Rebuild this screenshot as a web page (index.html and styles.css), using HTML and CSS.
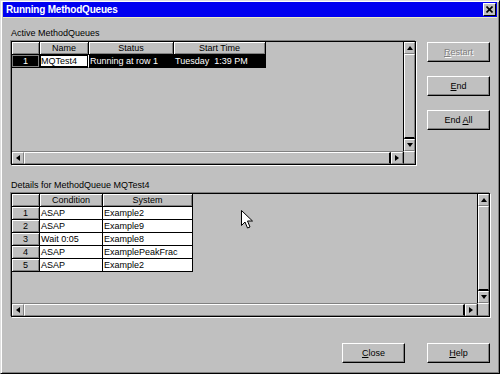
FILE: index.html
```html
<!DOCTYPE html>
<html>

<head>
    <title>Running MethodQueues</title>
    <link rel="stylesheet" href="styles.css">
</head>

<body>
    <div class="window">
        <div class="titlebar">
            <span class="title">Running MethodQueues</span>
            <span class="title-close">
                <svg width="7" height="7" viewBox="0 0 7 7">
                    <path d="M0.5 0.5 L6.5 6.5 M6.5 0.5 L0.5 6.5" stroke="#000" stroke-width="1.6" />
                </svg>
            </span>
        </div>

        <div class="client">
            <div class="top-section">
                <div class="panel">
                    <div class="caption">Active MethodQueues</div>
                    <div class="grid grid-active">
                        <div class="sheet">
                            <div class="rows rows-active">
                                <div class="cell head"></div>
                                <div class="cell head">Name</div>
                                <div class="cell head">Status</div>
                                <div class="cell head">Start Time</div>

                                <div class="cell head rowhead-sel">1</div>
                                <div class="cell current">MQTest4</div>
                                <div class="cell sel">Running at row 1</div>
                                <div class="cell sel">Tuesday  1:39 PM</div>
                            </div>
                        </div>
                        <div class="vscroll">
                            <div class="sb-btn"><span class="tri-up"></span></div>
                            <div class="sb-track v"></div>
                            <div class="sb-btn"><span class="tri-down"></span></div>
                        </div>
                        <div class="hscroll">
                            <div class="sb-btn"><span class="tri-left"></span></div>
                            <div class="sb-track h"></div>
                            <div class="sb-btn"><span class="tri-right"></span></div>
                        </div>
                        <div class="sb-corner"></div>
                    </div>
                </div>

                <div class="side-buttons">
                    <button class="btn disabled"><span><u>R</u>estart</span></button>
                    <button class="btn"><span><u>E</u>nd</span></button>
                    <button class="btn"><span>End <u>A</u>ll</span></button>
                </div>
            </div>

            <div class="caption details-caption">Details for MethodQueue MQTest4</div>
            <div class="grid grid-details">
                <div class="sheet">
                    <div class="rows rows-details">
                        <div class="cell head"></div>
                        <div class="cell head">Condition</div>
                        <div class="cell head">System</div>

                        <div class="cell head">1</div>
                        <div class="cell">ASAP</div>
                        <div class="cell">Example2</div>

                        <div class="cell head">2</div>
                        <div class="cell">ASAP</div>
                        <div class="cell">Example9</div>

                        <div class="cell head">3</div>
                        <div class="cell">Wait 0:05</div>
                        <div class="cell">Example8</div>

                        <div class="cell head">4</div>
                        <div class="cell">ASAP</div>
                        <div class="cell">ExamplePeakFrac</div>

                        <div class="cell head">5</div>
                        <div class="cell">ASAP</div>
                        <div class="cell">Example2</div>
                    </div>
                </div>
                <div class="vscroll">
                    <div class="sb-btn"><span class="tri-up"></span></div>
                    <div class="sb-track v"></div>
                    <div class="sb-btn"><span class="tri-down"></span></div>
                </div>
                <div class="hscroll">
                    <div class="sb-btn"><span class="tri-left"></span></div>
                    <div class="sb-track h"></div>
                    <div class="sb-btn"><span class="tri-right"></span></div>
                </div>
                <div class="sb-corner"></div>
            </div>

            <div class="footer">
                <button class="btn"><span><u>C</u>lose</span></button>
                <button class="btn"><span><u>H</u>elp</span></button>
            </div>
        </div>

        <svg class="cursor" width="13" height="20" viewBox="0 0 13 20">
            <path d="M0.5 0.5 L0.5 15.5 L4 12 L6.5 18 L9 17 L6.5 11 L11.5 11 Z" fill="#fff" stroke="#000" stroke-width="1" />
        </svg>
    </div>
</body>

</html>
```

FILE: styles.css
```css
body {
    margin: 0;
    background: #c0c0c0;
    font-family: "Liberation Sans", Arial, sans-serif;
    font-size: 9px;
    color: #000000;
}

.window {
    position: relative;
    width: 500px;
    height: 374px;
    box-sizing: border-box;
    border: 1px solid;
    border-color: #dfdfdf #000000 #000000 #dfdfdf;
    box-shadow: inset 1px 1px #ffffff, inset -1px -1px #808080;
    padding: 1px 2px 2px 2px;
    display: flex;
    flex-direction: column;
    background: #c0c0c0;
}

.titlebar {
    height: 15px;
    background: #0000f0;
    border-bottom: 1px solid #ecebc4;
    display: flex;
    align-items: center;
    justify-content: space-between;
    padding: 0 1px 0 3px;
}

.title {
    color: #ffffff;
    font-weight: bold;
    font-size: 10px;
    letter-spacing: -0.2px;
}

.title-close {
    width: 13px;
    height: 13px;
    box-sizing: border-box;
    background: #c0c0c0;
    border: 1px solid;
    border-color: #ffffff #000000 #000000 #ffffff;
    display: flex;
    align-items: center;
    justify-content: center;
}

.client {
    flex: 1;
    padding: 9px 7px 0 8px;
}

.top-section {
    display: flex;
    gap: 11px;
}

.caption {
    height: 13px;
    line-height: 13px;
    margin-bottom: 1px;
}

.details-caption {
    margin-top: 14px;
}

/* grid control: sheet + scrollbars */
.grid {
    box-sizing: border-box;
    border: 1px solid #000000;
    box-shadow: -1px -1px 0 #808080, 1px 1px 0 #ffffff;
    display: grid;
    grid-template-columns: 1fr 12px;
    grid-template-rows: 1fr 13px;
    background: #c0c0c0;
}

.grid-active {
    width: 405px;
    height: 124px;
}

.grid-details {
    width: 479px;
    height: 124px;
}

.sheet {
    overflow: hidden;
}

.rows {
    display: grid;
    grid-auto-rows: 13px;
    width: max-content;
}

.rows-active {
    grid-template-columns: 28px 49px 85px 92px;
}

.rows-details {
    grid-template-columns: 28px 63px 90px;
}

.cell {
    box-sizing: border-box;
    border-right: 1px solid #000000;
    border-bottom: 1px solid #000000;
    background: #ffffff;
    color: #000000;
    line-height: 12px;
    padding: 0 1px;
    white-space: pre;
    overflow: hidden;
}

.head {
    background: #c0c0c0;
    text-align: center;
    box-shadow: inset 1px 1px #ffffff, inset -1px -1px #808080;
}

.rowhead-sel {
    background: #000000;
    color: #ffffff;
    box-shadow: inset 1px 1px #808080, inset -1px -1px #808080;
}

.sel {
    background: #000000;
    color: #ffffff;
}

.current {
    background: #ffffff;
    box-shadow: inset 0 0 0 1px #000000;
    border-right-color: #ffffff;
}

.vscroll {
    grid-row: 1;
    grid-column: 2;
    display: flex;
    flex-direction: column;
    border-left: 1px solid #000000;
}

.hscroll {
    grid-row: 2;
    grid-column: 1;
    display: flex;
    border-top: 1px solid #808080;
}

.sb-btn {
    flex: none;
    width: 12px;
    height: 12px;
    box-sizing: border-box;
    background: #c0c0c0;
    border: 1px solid;
    border-color: #ffffff #808080 #808080 #ffffff;
    display: flex;
    align-items: center;
    justify-content: center;
}

.vscroll .sb-btn {
    width: 11px;
}

.sb-track {
    flex: 1;
    box-sizing: border-box;
    background: #c0c0c0;
    border: 1px solid;
    border-color: #ffffff #808080 #808080 #ffffff;
}

.sb-track.v {
    border-bottom: 2px solid #000000;
}

.sb-track.h {
    border-right: 2px solid #000000;
}

.sb-corner {
    grid-row: 2;
    grid-column: 2;
    box-sizing: border-box;
    border: 1px solid;
    border-color: #ffffff #808080 #808080 #ffffff;
    border-left: 1px solid #000000;
}

.tri-up,
.tri-down,
.tri-left,
.tri-right {
    width: 0;
    height: 0;
    border: 3px solid transparent;
}

.tri-up {
    border-bottom: 4px solid #000000;
    border-top: 0;
}

.tri-down {
    border-top: 4px solid #000000;
    border-bottom: 0;
}

.tri-left {
    border-right: 4px solid #000000;
    border-left: 0;
}

.tri-right {
    border-left: 4px solid #000000;
    border-right: 0;
}

/* push buttons */
.side-buttons {
    display: flex;
    flex-direction: column;
    gap: 14px;
    margin-top: 15px;
}

.btn {
    width: 63px;
    height: 20px;
    box-sizing: border-box;
    margin: 0;
    padding: 0;
    background: #c0c0c0;
    border: 1px solid;
    border-color: #ffffff #000000 #000000 #ffffff;
    box-shadow: inset -1px -1px #808080;
    font-family: "Liberation Sans", Arial, sans-serif;
    font-size: 9px;
    color: #000000;
    display: flex;
    align-items: center;
    justify-content: center;
}

.btn.disabled {
    color: #808080;
    text-shadow: 1px 1px #ffffff;
}

.footer {
    display: flex;
    justify-content: flex-end;
    gap: 22px;
    margin-top: 26px;
}

.cursor {
    position: absolute;
    left: 240px;
    top: 209px;
}
```
